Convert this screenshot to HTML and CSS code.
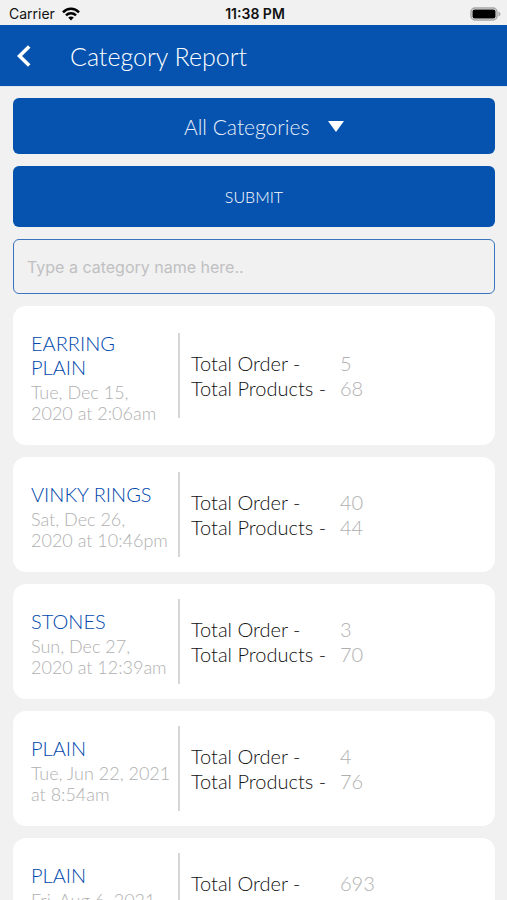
FILE: index.html
```html
<!DOCTYPE html>
<html lang="en">
<head>
    <meta charset="UTF-8">
    <meta name="viewport" content="width=device-width, initial-scale=1.0">
    <title>Category Report</title>
    <link rel="stylesheet" href="styles.css">
</head>
<body>

    <div class="status-bar">
        <div class="carrier">
            <span>Carrier</span>
            <svg class="wifi" viewBox="0 0 18 14" width="18" height="14" fill="none" stroke="#000" stroke-width="2.5">
                <path d="M1 5.3C5.5 .6 12.5 .6 17 5.3"/>
                <path d="M4 8.4C6.8 5.6 11.2 5.6 14 8.4"/>
                <path d="M9 13.4L6.2 10.5C7.8 9 10.2 9 11.8 10.5Z" fill="#000" stroke="none"/>
            </svg>
        </div>
        <div class="time">11:38 PM</div>
        <div class="battery">
            <svg viewBox="0 0 31 14" width="31" height="14">
                <rect x="1" y="1" width="26" height="12" rx="4" fill="#f1f1f1" stroke="#a5a5a5" stroke-width="1.5"/>
                <rect x="2.5" y="2.5" width="23" height="9" rx="2" fill="#000"/>
                <path d="M28.5 4.5C31 5.5 31 8.5 28.5 9.5Z" fill="#a5a5a5"/>
            </svg>
        </div>
    </div>

    <header class="header">
        <button type="button" class="back" aria-label="Back">
            <svg viewBox="0 0 14 22" width="14" height="22" fill="none" stroke="#fff" stroke-width="3.6">
                <path d="M12.2 1.5L2.5 11L12.2 20.5"/>
            </svg>
        </button>
        <h1>Category Report</h1>
    </header>

    <main class="content">
        <form class="filters" id="report-form">
            <label class="category-box">
                <select name="category" aria-label="Category">
                    <option>All Categories</option>
                </select>
                <svg viewBox="0 0 16 11" width="16" height="11" fill="#fff">
                    <path d="M0 0H16L8 11Z"/>
                </svg>
            </label>
            <button type="button" class="submit">SUBMIT</button>
            <input type="text" class="search" name="search" aria-label="Category name" placeholder="Type a category name here..">
        </form>

        <div class="card">
            <div class="info">
                <h2>EARRING<br>PLAIN</h2>
                <p>Tue, Dec 15,<br>2020 at 2:06am</p>
            </div>
            <dl class="totals">
                <dt>Total Order -</dt><dd>5</dd>
                <dt>Total Products -</dt><dd>68</dd>
            </dl>
        </div>

        <div class="card">
            <div class="info">
                <h2>VINKY RINGS</h2>
                <p>Sat, Dec 26,<br>2020 at 10:46pm</p>
            </div>
            <dl class="totals">
                <dt>Total Order -</dt><dd>40</dd>
                <dt>Total Products -</dt><dd>44</dd>
            </dl>
        </div>

        <div class="card">
            <div class="info">
                <h2>STONES</h2>
                <p>Sun, Dec 27,<br>2020 at 12:39am</p>
            </div>
            <dl class="totals">
                <dt>Total Order -</dt><dd>3</dd>
                <dt>Total Products -</dt><dd>70</dd>
            </dl>
        </div>

        <div class="card">
            <div class="info">
                <h2>PLAIN</h2>
                <p>Tue, Jun 22, 2021<br>at 8:54am</p>
            </div>
            <dl class="totals">
                <dt>Total Order -</dt><dd>4</dd>
                <dt>Total Products -</dt><dd>76</dd>
            </dl>
        </div>

        <div class="card">
            <div class="info">
                <h2>PLAIN</h2>
                <p>Fri, Aug 6, 2021</p>
            </div>
            <dl class="totals">
                <dt>Total Order -</dt><dd>693</dd>
            </dl>
        </div>
    </main>

</body>
</html>
```
FILE: styles.css
```css
* {
    box-sizing: border-box;
}
body {
    font-family: "Century Gothic", Lato, sans-serif;
    background-color: #f1f1f1;
    margin: 0;
    height: 100vh;
    display: flex;
    flex-direction: column;
    overflow: hidden;
}
h1, h2, p, dl, dd {
    margin: 0;
}
.status-bar {
    display: grid;
    grid-template-columns: 1fr auto 1fr;
    align-items: center;
    height: 25px;
    padding: 2px 6px 0 9px;
    flex-shrink: 0;
    font-family: Inter, sans-serif;
    font-size: 14px;
    color: #111;
}
.carrier {
    display: flex;
    align-items: center;
    gap: 7px;
}
.time {
    font-weight: 600;
}
.battery {
    display: flex;
    justify-content: flex-end;
}
.header {
    display: flex;
    align-items: center;
    gap: 39px;
    height: 62px;
    padding: 0 17px;
    flex-shrink: 0;
    background-color: #0552af;
    border-bottom: 1px solid #dce6f2;
    color: #fff;
}
.header h1 {
    font-size: 25px;
    font-weight: 300;
}
.back {
    display: flex;
    padding: 0;
    border: none;
    background: none;
    cursor: pointer;
}
.content {
    flex: 1;
    overflow-y: auto;
    scrollbar-width: none;
    padding: 11px 12px 12px 13px;
}
.filters {
    display: flex;
    flex-direction: column;
    gap: 12px;
    margin-bottom: 12px;
}
.category-box {
    display: flex;
    align-items: center;
    justify-content: center;
    gap: 18px;
    height: 56px;
    padding-left: 20px;
    background-color: #0552af;
    border-radius: 6px;
}
.category-box select {
    appearance: none;
    border: none;
    padding: 0;
    background: none;
    color: #e8f0fa;
    font-family: inherit;
    font-size: 21px;
    font-weight: 300;
}
.submit {
    height: 61px;
    border: none;
    border-radius: 6px;
    background-color: #0552af;
    color: #fff;
    font-family: inherit;
    font-size: 16px;
    font-weight: 300;
    cursor: pointer;
}
.search {
    height: 55px;
    padding: 0 13px;
    border: 1px solid #3b74bd;
    border-radius: 6px;
    background: none;
    font-family: Inter, sans-serif;
    font-size: 16px;
}
.search::placeholder {
    color: #c0c0c2;
}
.card {
    display: flex;
    align-items: flex-start;
    min-height: 115px;
    margin-bottom: 12px;
    padding: 0 18px;
    background-color: #fff;
    border-radius: 13px;
}
.info {
    width: 147px;
    flex-shrink: 0;
    padding: 25px 0 21px;
    white-space: nowrap;
}
.info h2 {
    font-size: 20px;
    font-weight: 300;
    line-height: 24px;
    color: #0048ac;
}
.info p {
    margin-top: 3px;
    font-size: 18px;
    font-weight: 300;
    line-height: 21px;
    color: #b0b0b0;
}
.totals {
    display: grid;
    grid-template-columns: 149px auto;
    grid-template-rows: 25px 25px;
    align-content: center;
    align-self: center;
    height: 85px;
    padding-left: 11px;
    border-left: 2px solid #d6d6d6;
    font-size: 20px;
    font-weight: 300;
    line-height: 25px;
    color: #111;
}
.totals dd {
    color: #b0b0b0;
}
```
